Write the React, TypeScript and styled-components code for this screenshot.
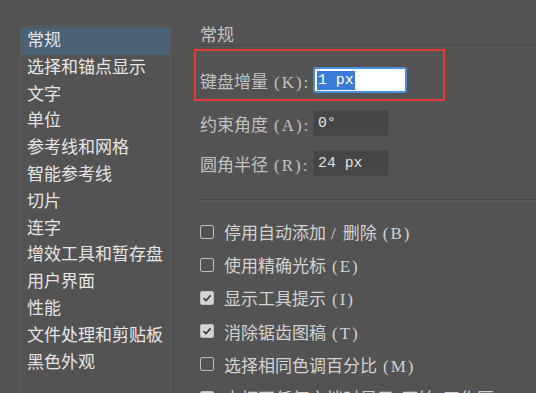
import styled, { createGlobalStyle } from "styled-components"

const GlobalStyle = createGlobalStyle`
  html, body {
    margin: 0;
    padding: 0;
    background: #535353;
    overflow: hidden;
  }
`

const cjk = `"Liberation Serif", "Noto Sans CJK SC", serif`
const mono = `"Liberation Mono", "DejaVu Sans Mono", monospace`

const Page = styled.div`
  display: flex;
  height: 393px;
  width: 536px;
  overflow: hidden;
  background: #535353;
  font-family: ${cjk};
`

const Sidebar = styled.ul`
  list-style: none;
  margin: 26px 0 0 20px;
  padding: 1px 0 0;
  width: 149px;
  flex-shrink: 0;
  border: 1px solid #5e5e5e;
  border-bottom: none;
  height: 400px;
`

const NavItem = styled.li<{ $active?: boolean }>`
  height: 26.8px;
  line-height: 26.8px;
  padding-left: 6px;
  font-size: 17px;
  color: #e6e6e6;
  background: ${(p) => (p.$active ? "#4b6178" : "transparent")};
  white-space: nowrap;
`

const Main = styled.div`
  flex: 1;
  padding-left: 23px;
  padding-top: 27px;
  min-width: 0;
`

const Heading = styled.div`
  font-size: 17px;
  color: #c4c4c4;
  padding-left: 6px;
  line-height: 18px;
`

const Divider = styled.div`
  height: 1px;
  background: #474747;
  border-bottom: 1px solid #5a5a5a;
  margin-left: 4px;
  margin-right: -20px;
`

const Highlight = styled.div`
  width: 251px;
  height: 52px;
  border: 2px solid #e53935;
  margin-top: 2px;
  display: flex;
  align-items: flex-end;
  padding-bottom: 6px;
  box-sizing: border-box;
`

const FieldRow = styled.div`
  display: flex;
  align-items: center;
  padding-left: 4px;
`

const Label = styled.span`
  width: 113px;
  font-size: 17px;
  color: #c2c2c2;
  white-space: nowrap;
`

const Shortcut = styled.span`
  font-size: 17px;
  letter-spacing: 2px;
  margin-left: 6px;
`

const Input = styled.div<{ $focused?: boolean; $w: number }>`
  width: ${(p) => p.$w}px;
  height: 26px;
  box-sizing: border-box;
  border-radius: 3px;
  display: flex;
  align-items: center;
  padding-left: ${(p) => (p.$focused ? 2 : 4)}px;
  font-family: ${mono};
  font-size: 14.8px;
  color: #e2e2e2;
  background: ${(p) => (p.$focused ? "#ffffff" : "#464646")};
  border: ${(p) => (p.$focused ? "2px solid #4a8fe0" : "1px solid #4c4c4c")};
`

const Selected = styled.span`
  background: #3a7bd8;
  color: #ffffff;
  line-height: 19px;
  padding: 0 1px;
`

const Fields = styled.div`
  display: flex;
  flex-direction: column;
  gap: 14px;
  margin-top: 9px;
  margin-bottom: 23px;
  padding-left: 2px;
`

const Checks = styled.div`
  display: flex;
  flex-direction: column;
  padding-top: 14px;
  padding-left: 6px;
`

const CheckRow = styled.label`
  display: flex;
  align-items: center;
  height: 33.2px;
  flex-shrink: 0;
  gap: 10px;
  font-size: 17px;
  color: #d2d2d2;
  white-space: nowrap;
`

const Box = styled.span<{ $checked?: boolean }>`
  width: 14px;
  height: 14px;
  box-sizing: border-box;
  border-radius: 2px;
  flex-shrink: 0;
  border: 1.5px solid #bdbdbd;
  background: ${(p) => (p.$checked ? "#d4d4d4" : "transparent")};
  display: flex;
  align-items: center;
  justify-content: center;
`

const navItems = [
  "常规",
  "选择和锚点显示",
  "文字",
  "单位",
  "参考线和网格",
  "智能参考线",
  "切片",
  "连字",
  "增效工具和暂存盘",
  "用户界面",
  "性能",
  "文件处理和剪贴板",
  "黑色外观",
]

const checks = [
  { label: "停用自动添加/删除", key: "B", checked: false },
  { label: "使用精确光标", key: "E", checked: false },
  { label: "显示工具提示", key: "I", checked: true },
  { label: "消除锯齿图稿", key: "T", checked: true },
  { label: "选择相同色调百分比", key: "M", checked: false },
  { label: "未打开任何文档时显示“开始”工作区", key: "H", checked: true },
]

function CheckMark() {
  return (
    <svg width="10" height="10" viewBox="0 0 10 10">
      <path d="M1.5 5.2 L4 7.6 L8.6 2.4" fill="none" stroke="#3a3a3a" strokeWidth="1.6" />
    </svg>
  )
}

function CheckLabel({ text }: { text: string }) {
  const [a, b] = text.split("/")
  if (b === undefined) return <>{text}</>
  return (
    <>
      {a}
      <Shortcut style={{ margin: "0 5px" }}>/</Shortcut>
      {b}
    </>
  )
}

export default function App() {
  return (
    <>
      <GlobalStyle />
      <Page>
        <Sidebar>
          {navItems.map((item, i) => (
            <NavItem key={item} $active={i === 0}>
              {item}
            </NavItem>
          ))}
        </Sidebar>

        <Main>
          <Heading>常规</Heading>
          <Divider />
          <Highlight>
            <FieldRow>
              <Label>
                键盘增量<Shortcut>(K):</Shortcut>
              </Label>
              <Input $focused $w={94}>
                <Selected>1 px</Selected>
              </Input>
            </FieldRow>
          </Highlight>
          <Fields>
            <FieldRow>
              <Label>
                约束角度<Shortcut>(A):</Shortcut>
              </Label>
              <Input $w={76}>0°</Input>
            </FieldRow>
            <FieldRow>
              <Label>
                圆角半径<Shortcut>(R):</Shortcut>
              </Label>
              <Input $w={76}>24 px</Input>
            </FieldRow>
          </Fields>
          <Divider />
          <Checks>
            {checks.map((c) => (
              <CheckRow key={c.label}>
                <Box $checked={c.checked}>{c.checked && <CheckMark />}</Box>
                <span>
                  <CheckLabel text={c.label} />
                  <Shortcut>({c.key})</Shortcut>
                </span>
              </CheckRow>
            ))}
          </Checks>
        </Main>
      </Page>
    </>
  )
}
